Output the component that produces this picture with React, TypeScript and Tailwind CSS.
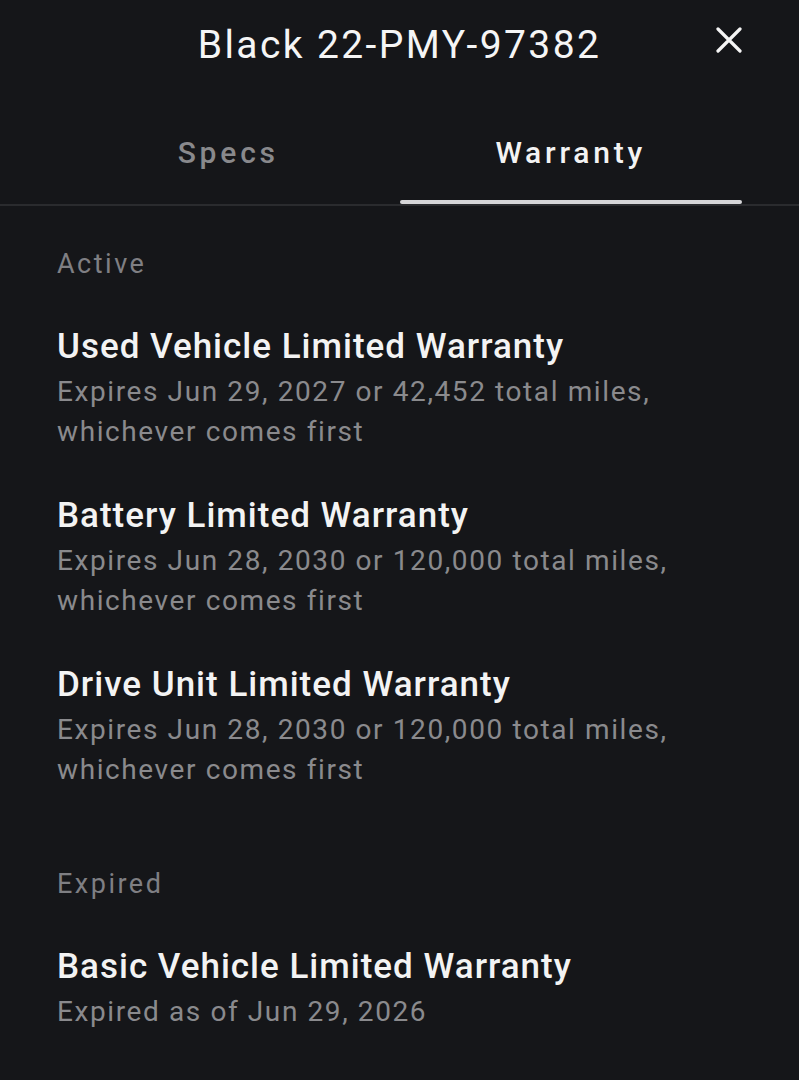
const active = [
  {
    name: 'Used Vehicle Limited Warranty',
    lines: ['Expires Jun 29, 2027 or 42,452 total miles,', 'whichever comes first'],
  },
  {
    name: 'Battery Limited Warranty',
    lines: ['Expires Jun 28, 2030 or 120,000 total miles,', 'whichever comes first'],
  },
  {
    name: 'Drive Unit Limited Warranty',
    lines: ['Expires Jun 28, 2030 or 120,000 total miles,', 'whichever comes first'],
  },
]

const expired = [
  {
    name: 'Basic Vehicle Limited Warranty',
    lines: ['Expired as of Jun 29, 2026'],
  },
]

function WarrantyItem({ name, lines }: { name: string; lines: string[] }) {
  return (
    <div className="flex flex-col">
      <h3 className="text-[35px] leading-[36px] font-medium text-[#f3f3f3] tracking-[1px]">{name}</h3>
      <div className="mt-[7px]">
        {lines.map((line) => (
          <p key={line} className="text-[28px] leading-[40px] text-[#8a8a8d] tracking-[1.6px]">
            {line}
          </p>
        ))}
      </div>
    </div>
  )
}

function CloseIcon() {
  return (
    <svg width="26" height="26" viewBox="0 0 26 26" fill="none" stroke="currentColor" strokeWidth="3.2" strokeLinecap="round">
      <path d="M2 2 L24 24 M24 2 L2 24" />
    </svg>
  )
}

export default function App() {
  return (
    <div className="min-h-[1080px] w-[799px] bg-[#151619] font-['Roboto',sans-serif] overflow-hidden">
      <header className="relative h-[90px] flex items-center justify-center">
        <h1 className="text-[39px] leading-none font-normal text-[#f5f5f5] tracking-[2.4px]">
          Black 22-PMY-97382
        </h1>
        <button className="absolute left-[716px] top-[27px] text-[#f5f5f5]">
          <CloseIcon />
        </button>
      </header>

      <nav className="border-b-2 border-[#2a2b2e] px-[57px] flex">
        <div className="flex-1 flex flex-col items-center">
          <span className="pt-[46px] pb-[30px] text-[30px] leading-[34px] font-medium text-[#89898c] tracking-[3.8px]">Specs</span>
          <div className="h-[4px] w-full" />
        </div>
        <div className="flex-1 flex flex-col items-center">
          <span className="pt-[46px] pb-[30px] text-[30px] leading-[34px] font-medium text-[#f3f3f3] tracking-[3.8px]">Warranty</span>
          <div className="h-[4px] w-full rounded-full bg-[#d6d6d8]" />
        </div>
      </nav>

      <main className="px-[57px] pt-[42px]">
        <p className="text-[27px] leading-[32px] text-[#7f7f83] tracking-[2.5px]">Active</p>
        <div className="mt-[49px] flex flex-col gap-[46px]">
          {active.map((w) => (
            <WarrantyItem key={w.name} {...w} />
          ))}
        </div>

        <p className="mt-[78px] text-[27px] leading-[32px] text-[#7f7f83] tracking-[2.5px]">Expired</p>
        <div className="mt-[49px] flex flex-col gap-[46px]">
          {expired.map((w) => (
            <WarrantyItem key={w.name} {...w} />
          ))}
        </div>
      </main>
    </div>
  )
}
